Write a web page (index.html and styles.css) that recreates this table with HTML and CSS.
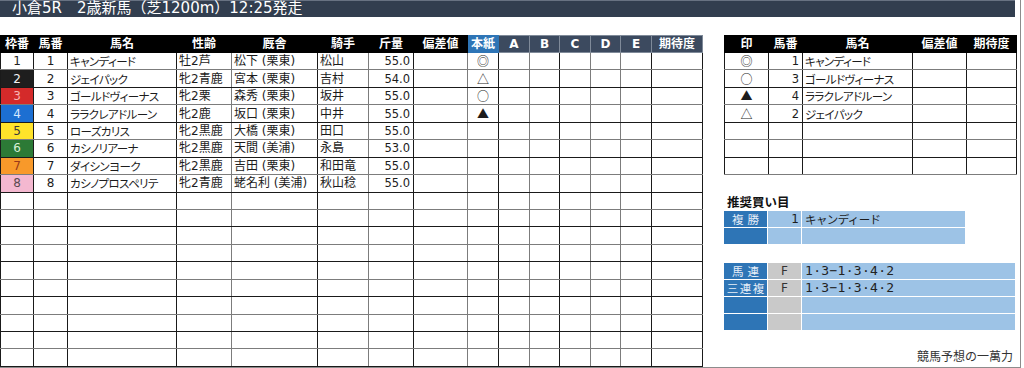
FILE: index.html
```html
<!DOCTYPE html>
<html lang="ja">
<head>
<meta charset="utf-8">
<title>小倉5R 2歳新馬</title>
<link rel="stylesheet" href="styles.css">
</head>
<body>
<div class="page">
  <div class="titlebar">小倉5R　2歳新馬（芝1200m）12:25発走</div>
  <div class="content">
    <table class="main">
      <colgroup>
        <col style="width:33px"><col style="width:34px"><col style="width:109px"><col style="width:55px"><col style="width:86px"><col style="width:51px"><col style="width:45px"><col style="width:54px"><col style="width:31px"><col style="width:31px"><col style="width:30px"><col style="width:31px"><col style="width:30px"><col style="width:31px"><col style="width:51px">
      </colgroup>
      <thead>
        <tr>
          <th>枠番</th><th>馬番</th><th>馬名</th><th>性齢</th><th>厩舎</th><th>騎手</th><th>斤量</th><th>偏差値</th>
          <th class="hon">本紙</th><th class="sl">A</th><th class="sl">B</th><th class="sl">C</th><th class="sl">D</th><th class="sl">E</th><th class="sl">期待度</th>
        </tr>
      </thead>
      <tbody>
        <tr><td class="c w1">1</td><td class="c">1</td><td class="nm">キャンディード</td><td>牡2芦</td><td>松下 (栗東)</td><td>松山</td><td class="r">55.0</td><td></td><td class="mk">◎</td><td></td><td></td><td></td><td></td><td></td><td></td></tr>
        <tr><td class="c w2">2</td><td class="c">2</td><td class="nm">ジェイパック</td><td>牝2青鹿</td><td>宮本 (栗東)</td><td>吉村</td><td class="r">54.0</td><td></td><td class="mk">△</td><td></td><td></td><td></td><td></td><td></td><td></td></tr>
        <tr><td class="c w3">3</td><td class="c">3</td><td class="nm">ゴールドヴィーナス</td><td>牝2栗</td><td>森秀 (栗東)</td><td>坂井</td><td class="r">55.0</td><td></td><td class="mk">○</td><td></td><td></td><td></td><td></td><td></td><td></td></tr>
        <tr><td class="c w4">4</td><td class="c">4</td><td class="nm">ララクレアドルーン</td><td>牝2鹿</td><td>坂口 (栗東)</td><td>中井</td><td class="r">55.0</td><td></td><td class="mk">▲</td><td></td><td></td><td></td><td></td><td></td><td></td></tr>
        <tr><td class="c w5">5</td><td class="c">5</td><td class="nm">ローズカリス</td><td>牝2黒鹿</td><td>大橋 (栗東)</td><td>田口</td><td class="r">55.0</td><td></td><td></td><td></td><td></td><td></td><td></td><td></td><td></td></tr>
        <tr><td class="c w6">6</td><td class="c">6</td><td class="nm">カシノリアーナ</td><td>牝2黒鹿</td><td>天間 (美浦)</td><td>永島</td><td class="r">53.0</td><td></td><td></td><td></td><td></td><td></td><td></td><td></td><td></td></tr>
        <tr><td class="c w7">7</td><td class="c">7</td><td class="nm">ダイシンヨーク</td><td>牝2黒鹿</td><td>吉田 (栗東)</td><td>和田竜</td><td class="r">55.0</td><td></td><td></td><td></td><td></td><td></td><td></td><td></td><td></td></tr>
        <tr><td class="c w8">8</td><td class="c">8</td><td class="nm">カシノプロスペリテ</td><td>牝2青鹿</td><td>蛯名利 (美浦)</td><td>秋山稔</td><td class="r">55.0</td><td></td><td></td><td></td><td></td><td></td><td></td><td></td><td></td></tr>
        <tr><td></td><td></td><td></td><td></td><td></td><td></td><td></td><td></td><td></td><td></td><td></td><td></td><td></td><td></td><td></td></tr>
        <tr><td></td><td></td><td></td><td></td><td></td><td></td><td></td><td></td><td></td><td></td><td></td><td></td><td></td><td></td><td></td></tr>
        <tr><td></td><td></td><td></td><td></td><td></td><td></td><td></td><td></td><td></td><td></td><td></td><td></td><td></td><td></td><td></td></tr>
        <tr><td></td><td></td><td></td><td></td><td></td><td></td><td></td><td></td><td></td><td></td><td></td><td></td><td></td><td></td><td></td></tr>
        <tr><td></td><td></td><td></td><td></td><td></td><td></td><td></td><td></td><td></td><td></td><td></td><td></td><td></td><td></td><td></td></tr>
        <tr><td></td><td></td><td></td><td></td><td></td><td></td><td></td><td></td><td></td><td></td><td></td><td></td><td></td><td></td><td></td></tr>
        <tr><td></td><td></td><td></td><td></td><td></td><td></td><td></td><td></td><td></td><td></td><td></td><td></td><td></td><td></td><td></td></tr>
        <tr><td></td><td></td><td></td><td></td><td></td><td></td><td></td><td></td><td></td><td></td><td></td><td></td><td></td><td></td><td></td></tr>
        <tr><td></td><td></td><td></td><td></td><td></td><td></td><td></td><td></td><td></td><td></td><td></td><td></td><td></td><td></td><td></td></tr>
        <tr><td></td><td></td><td></td><td></td><td></td><td></td><td></td><td></td><td></td><td></td><td></td><td></td><td></td><td></td><td></td></tr>
      </tbody>
    </table>

    <div class="side">
      <table class="marks">
        <colgroup>
          <col style="width:44px"><col style="width:34px"><col style="width:110px"><col style="width:54px"><col style="width:50px">
        </colgroup>
        <thead>
          <tr><th>印</th><th>馬番</th><th>馬名</th><th>偏差値</th><th>期待度</th></tr>
        </thead>
        <tbody>
          <tr><td class="mk">◎</td><td class="r">1</td><td class="nm">キャンディード</td><td></td><td></td></tr>
          <tr><td class="mk">○</td><td class="r">3</td><td class="nm">ゴールドヴィーナス</td><td></td><td></td></tr>
          <tr><td class="mk">▲</td><td class="r">4</td><td class="nm">ララクレアドルーン</td><td></td><td></td></tr>
          <tr><td class="mk">△</td><td class="r">2</td><td class="nm">ジェイパック</td><td></td><td></td></tr>
          <tr><td></td><td></td><td></td><td></td><td></td></tr>
          <tr><td></td><td></td><td></td><td></td><td></td></tr>
          <tr><td></td><td></td><td></td><td></td><td></td></tr>
        </tbody>
      </table>

      <div class="rec-title">推奨買い目</div>

      <div class="bets bets-1">
        <div class="lab wide">複勝</div><div class="num">1</div><div class="val nm">キャンディード</div>
        <div class="lab"></div><div class="num"></div><div class="val"></div>
      </div>

      <div class="bets bets-2">
        <div class="lab wide">馬連</div><div class="typ">F</div><div class="val combo">1·3−1·3·4·2</div>
        <div class="lab">三連複</div><div class="typ">F</div><div class="val combo">1·3−1·3·4·2</div>
        <div class="lab"></div><div class="typ"></div><div class="val"></div>
        <div class="lab"></div><div class="typ"></div><div class="val"></div>
      </div>

      <div class="footer">競馬予想の一萬力</div>
    </div>
  </div>
</div>
</body>
</html>
```

FILE: styles.css
```css
* { box-sizing: border-box; }

body {
  margin: 0;
  background: #fff;
  color: #1c1c1c;
  font-family: "DejaVu Sans", "Noto Sans CJK JP", sans-serif;
}

.page {
  width: 1021px;
  height: 368px;
  border-right: 1px solid #8c8c8c;
  border-bottom: 1px solid #8c8c8c;
  display: flex;
  flex-direction: column;
  overflow: hidden;
}

.titlebar {
  width: 1015px;
  height: 17px;
  flex: none;
  background: #323e4f;
  border-top: 1px solid #687282;
  color: #fff;
  font-family: "DejaVu Sans", "Noto Sans CJK JP", sans-serif;
  font-size: 15px;
  line-height: 15px;
  padding-left: 12px;
  white-space: nowrap;
}

.content {
  flex: 1;
  display: flex;
  gap: 21px;
  margin-top: 18px;
  align-items: flex-start;
}

table {
  border-collapse: collapse;
  table-layout: fixed;
  font-size: 12px;
  line-height: 14px;
  font-feature-settings: "palt";
}

.main { width: 702px; }
.marks { width: 292px; }

th {
  height: 17px;
  padding: 0;
  background: #000;
  color: #fff;
  font-family: "DejaVu Sans", "Noto Sans CJK JP", sans-serif;
  font-weight: bold;
  font-size: 12px;
  text-align: center;
  border: 1px solid #000;
  white-space: nowrap;
  overflow: hidden;
}

th.hon { background: #2e75b6; border-color: #2e75b6; }
th.sl { background: #3c4a5f; border-color: #7f8a99; }

td {
  height: 17.44px;
  padding: 0 2px;
  border: 1px solid #1a1a1a;
  white-space: nowrap;
  overflow: hidden;
  vertical-align: middle;
}

tbody tr:nth-child(odd) td { border-bottom-color: #7c7c7c; }

.main td:nth-child(4),
.main td:nth-child(6),
.main td:nth-child(8),
.main td:nth-child(10),
.main td:nth-child(12),
.main td:nth-child(13) { border-right-color: #7c7c7c; }

td.c { text-align: center; padding: 0; }
td.r { text-align: right; padding-right: 3px; font-size: 11.5px; }
td.mk {
  text-align: center;
  padding: 0;
  font-family: "Noto Sans CJK JP", sans-serif;
  font-size: 12px;
}

.nm {
  font-family: "Noto Sans CJK JP", sans-serif;
  font-size: 11.5px;
  letter-spacing: -0.6px;
}

.w1 { background: #fff; color: #222; }
.w2 { background: #1e1e1e; color: #f2f2f2; }
.w3 { background: #d42a2a; color: #f8b4b4; }
.w4 { background: #1c6fd2; color: #d6e8ff; }
.w5 { background: #ffe32a; color: #3a3a3a; }
.w6 { background: #2c7a36; color: #d8efd8; }
.w7 { background: #f8992a; color: #9a3a1a; }
.w8 { background: #f4b8d0; color: #5a4a50; }

.side {
  width: 292px;
  align-self: stretch;
  display: flex;
  flex-direction: column;
}

.rec-title {
  margin-top: 18px;
  padding-left: 3px;
  height: 18px;
  font-family: "Noto Sans CJK JP", sans-serif;
  font-weight: bold;
  font-size: 12.5px;
  line-height: 18px;
  color: #111;
}

.bets {
  display: grid;
  gap: 1px;
  background: #fff;
  grid-auto-rows: 16px;
  font-size: 12px;
  line-height: 16px;
}

.bets-1 {
  width: 241px;
  grid-template-columns: 43px 33px 163px;
}

.bets-2 {
  width: 291px;
  margin-top: 19px;
  grid-template-columns: 43px 33px 213px;
}

.bets .lab {
  background: #2e75b6;
  color: #e6eef8;
  text-align: center;
  font-family: "Noto Sans CJK JP", sans-serif;
  font-size: 11.5px;
  letter-spacing: 1.5px;
  text-indent: 1.5px;
  white-space: nowrap;
  overflow: hidden;
}

.bets .lab.wide {
  letter-spacing: 4px;
  text-indent: 4px;
}

.bets .num {
  background: #9dc3e6;
  text-align: right;
  padding-right: 2px;
}

.bets .typ {
  background: #c9c9c9;
  color: #333;
  text-align: center;
}

.bets .val {
  background: #9dc3e6;
  padding-left: 3px;
  white-space: nowrap;
}

.bets .combo {
  font-family: "DejaVu Sans Mono", monospace;
  font-size: 13px;
  letter-spacing: 0.3px;
  color: #222;
}

.footer {
  margin-top: auto;
  margin-bottom: 4px;
  text-align: right;
  padding-right: 3px;
  font-family: "Noto Sans CJK JP", sans-serif;
  font-size: 12px;
  line-height: 14px;
  color: #333;
}
```
